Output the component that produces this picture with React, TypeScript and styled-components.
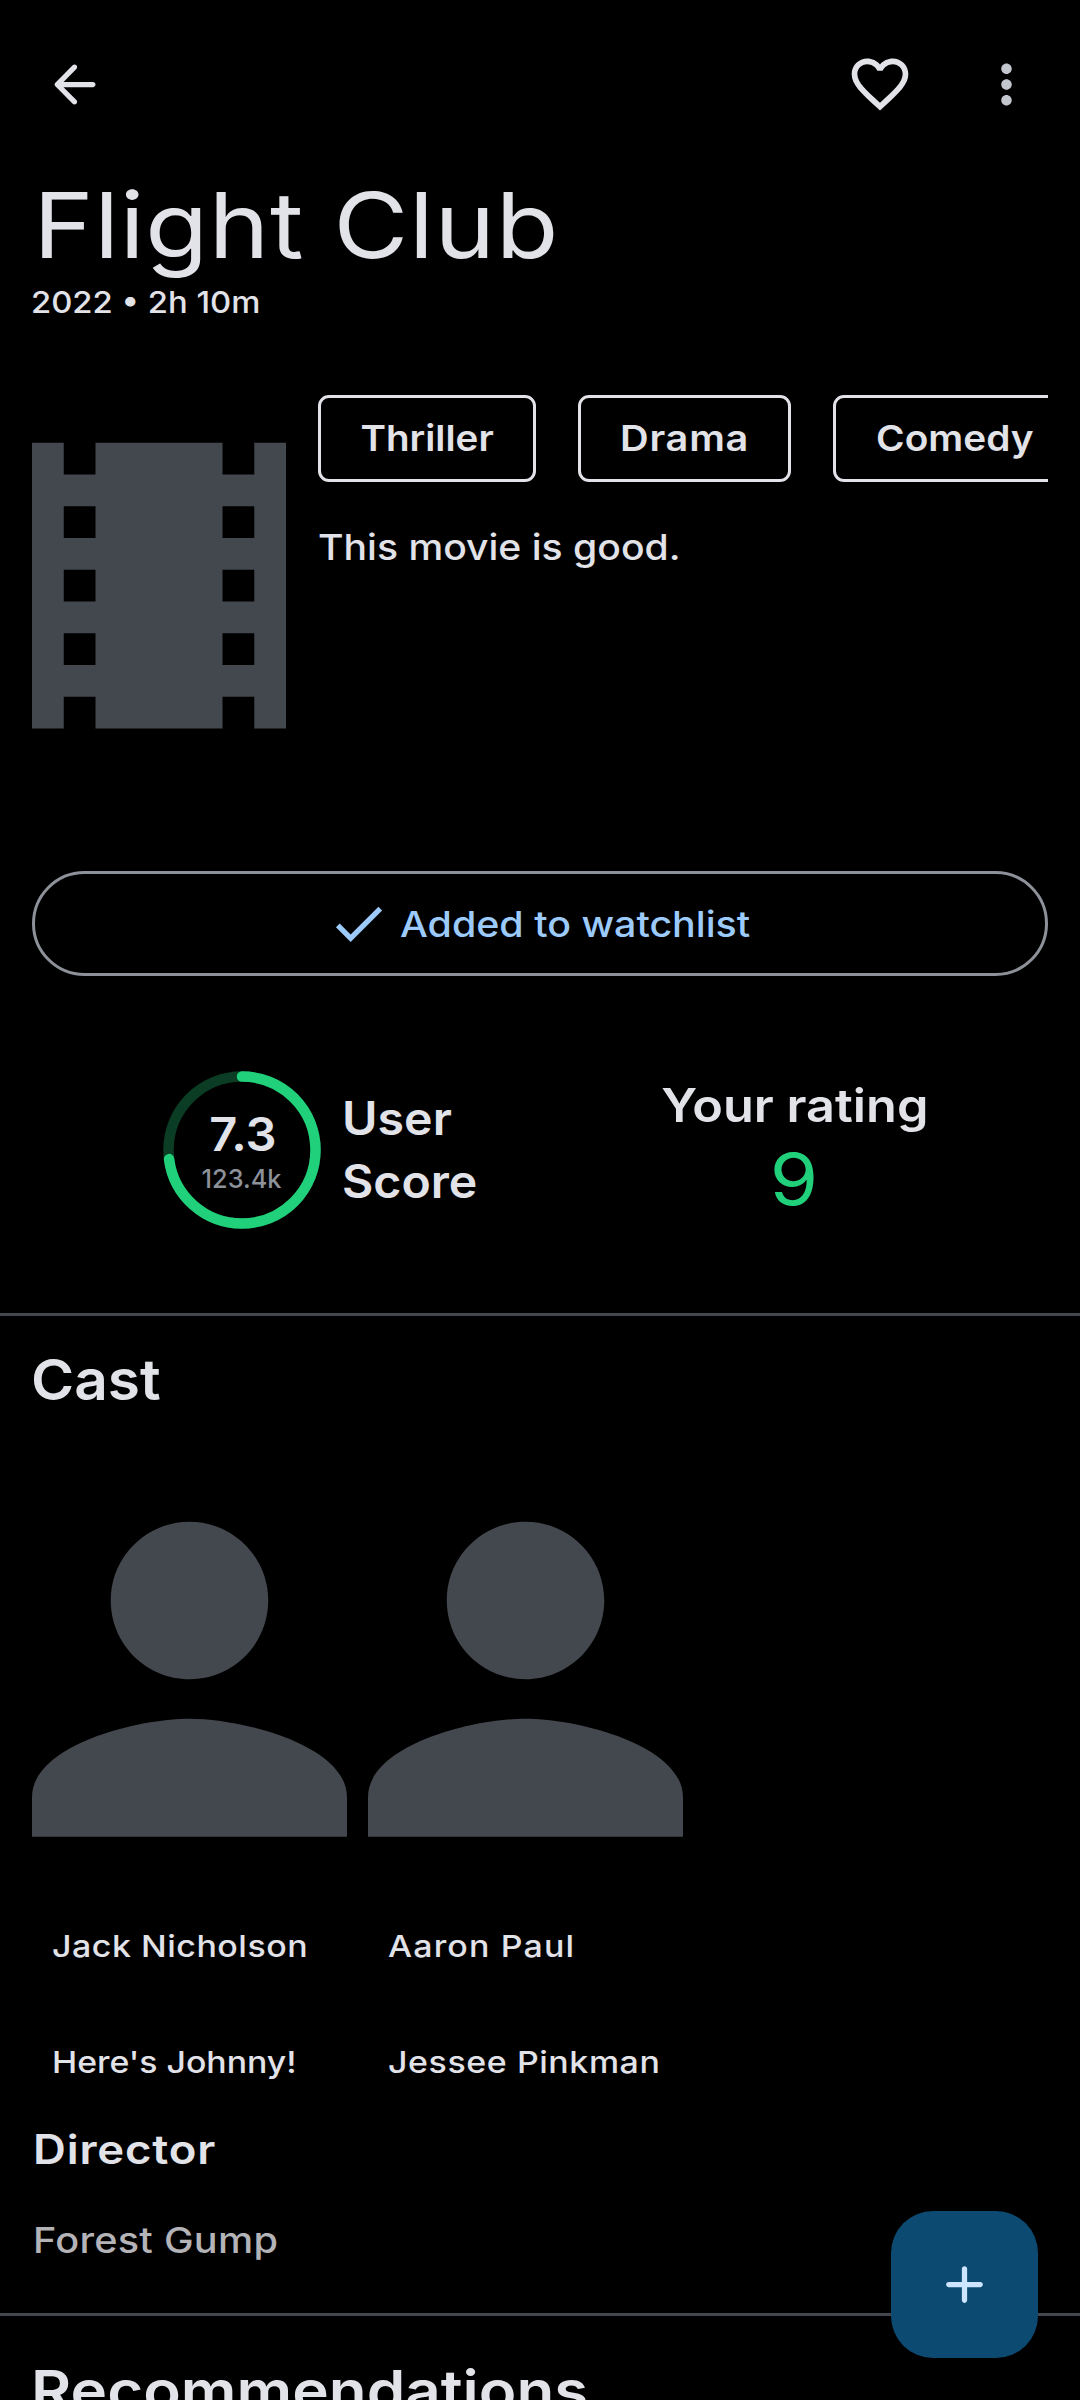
import React from "react";
import styled, { createGlobalStyle } from "styled-components";

const color = {
  background: "#000000",
  text: "#e2e2e9",
  icon: "#c3c6cf",
  outline: "#8d9199",
  surface: "#43474e",
  primary: "#9ccbfb",
  container: "#0d4a72",
  onContainer: "#cee5ff",
  score: "#21d07a",
  scoreTrack: "#0a3d24",
  faded: "#b3b3b8",
};

const GlobalStyle = createGlobalStyle`
  *, *::before, *::after { box-sizing: border-box; }
  html, body { margin: 0; padding: 0; background: ${color.background}; }
  body { font-family: Inter, "Open Sans", sans-serif; color: ${color.text}; }
  svg { display: block; flex: none; }
`;

const Screen = styled.main`
  width: 1080px;
  height: 2400px;
  overflow: hidden;
  display: flex;
  flex-direction: column;
  background: ${color.background};
`;

type TextProps = { $tracking?: number; $stretch?: number };

const Text = styled.span<TextProps>`
  display: block;
  white-space: nowrap;
  letter-spacing: ${(p) => p.$tracking ?? 0}px;
  margin-right: ${(p) => -(p.$tracking ?? 0)}px;
  font-weight: 500;
  transform: scaleX(${(p) => p.$stretch ?? 1});
  transform-origin: left center;
`;

const Toolbar = styled.header`
  flex: none;
  height: 169px;
  padding: 0 42px 0 43px;
  display: flex;
  align-items: center;
  justify-content: space-between;
`;

const Actions = styled.div`
  display: flex;
  align-items: center;
  gap: 61px;
`;

const IconButton = styled.button`
  border: 0;
  padding: 0;
  background: none;
  color: ${color.text};
`;

const FavoriteButton = styled(IconButton)`
  padding-bottom: 2px;
`;

const Heading = styled.div`
  flex: none;
  padding-left: 31px;
`;

const Title = styled(Text).attrs({ as: "h1" })`
  margin: 0;
  padding-left: 2px;
  font-size: 91px;
  line-height: 113px;
  font-weight: 400;
`;

const Subtitle = styled(Text)`
  font-size: 30.3px;
  line-height: 40px;
`;

const Hero = styled.section`
  flex: none;
  margin: 73px 32px 0;
  height: 381px;
  display: grid;
  grid-template-columns: 254px 1fr;
  column-gap: 32px;
`;

const Details = styled.div`
  min-width: 0;
`;

const ChipRow = styled.div`
  display: flex;
  gap: 42px;
  overflow: hidden;
`;

const Chip = styled.div<{ $width: number }>`
  flex: none;
  width: ${(p) => p.$width}px;
  height: 87px;
  border: 3px solid ${color.text};
  border-radius: 11px;
  display: flex;
  align-items: center;
  justify-content: center;
`;

const ChipLabel = styled(Text)`
  transform-origin: center;
  font-size: 35.4px;
  line-height: 53px;
  font-weight: 600;
`;

const Overview = styled(Text)`
  margin-top: 39px;
  font-size: 35.4px;
  line-height: 53px;
`;

const WatchlistButton = styled.button`
  flex: none;
  margin: 95px 32px 0;
  height: 105px;
  padding: 0;
  border: 3px solid ${color.outline};
  border-radius: 53px;
  background: none;
  color: ${color.primary};
  font-family: inherit;
  display: flex;
  align-items: center;
  justify-content: center;
  gap: 10px;
`;

const WatchlistLabel = styled(Text)`
  margin-right: 38px;
  padding-top: 1px;
  font-size: 35.4px;
  line-height: 53px;
`;

const Ratings = styled.section`
  flex: none;
  margin-top: 95px;
  height: 158px;
  padding: 0 88px 0 41px;
  display: grid;
  grid-template-columns: 556px 1fr;
`;

const UserScore = styled.div`
  display: flex;
  align-items: center;
  justify-content: center;
  gap: 21px;
`;

const ScoreDial = styled.div`
  width: 158px;
  height: 158px;
  display: grid;
  place-items: center;

  > * {
    grid-area: 1 / 1;
  }
`;

const ScoreText = styled.div`
  padding-top: 2px;
  display: flex;
  flex-direction: column;
  align-items: center;
`;

const ScoreValue = styled(Text)`
  padding-left: 3px;
  transform-origin: center;
  font-size: 46px;
  line-height: 56px;
  font-weight: 600;
`;

const ScoreVotes = styled(Text)`
  font-size: 25.3px;
  line-height: 34px;
  color: ${color.outline};
`;

const ScoreCaption = styled.div`
  width: 134px;
`;

const RatingLabel = styled(Text)<{ $centered?: boolean }>`
  transform-origin: ${(p) => (p.$centered ? "center" : "left center")};
  font-size: 46px;
  line-height: 63px;
  font-weight: 600;
`;

const YourRating = styled.div`
  padding-top: 3px;
  display: flex;
  flex-direction: column;
  align-items: center;
`;

const RatingValue = styled(Text)`
  transform-origin: center;
  font-size: 71px;
  line-height: 84px;
  font-weight: 400;
  color: ${color.score};
`;

const Divider = styled.hr<{ $top: number }>`
  flex: none;
  width: 100%;
  height: 3px;
  margin: ${(p) => p.$top}px 0 0;
  border: 0;
  background: ${color.surface};
`;

const SectionTitle = styled(Text).attrs({ as: "h2" })<{ $top: number }>`
  flex: none;
  margin-top: ${(p) => p.$top}px;
  margin-bottom: 0;
  padding-left: 31px;
  transform-origin: 31px center;
  font-size: 56.6px;
  line-height: 74px;
  font-weight: 600;
`;

const CastList = styled.div`
  flex: none;
  margin-top: 26px;
  padding-left: 32px;
  display: flex;
  gap: 21px;
`;

const CastCard = styled.article`
  width: 315px;
  height: 640px;
`;

const CastText = styled(Text)<{ $top: number }>`
  margin-top: ${(p) => p.$top}px;
  padding-left: 20px;
  transform-origin: 20px center;
  font-size: 30.3px;
  line-height: 42px;
`;

const Crew = styled.section`
  flex: none;
  margin-top: 36px;
  padding-left: 33px;
`;

const CrewRole = styled(Text)`
  font-size: 40.4px;
  line-height: 62px;
  font-weight: 600;
`;

const CrewName = styled(Text)`
  margin-top: 33px;
  font-size: 35.4px;
  line-height: 53px;
  color: ${color.faded};
`;

const Fab = styled.button`
  position: fixed;
  left: 891px;
  top: 2211px;
  width: 147px;
  height: 147px;
  padding: 0;
  border: 0;
  border-radius: 42px;
  background: ${color.container};
  color: ${color.onContainer};
  display: flex;
  align-items: center;
  justify-content: center;
`;

type IconProps = { path: string; size?: number; fill?: string };

const Icon = ({ path, size = 63, fill = "currentColor" }: IconProps) => (
  <svg width={size} height={size} viewBox="0 0 24 24" fill={fill} aria-hidden="true">
    <path d={path} />
  </svg>
);

const paths = {
  back: "M19 11H7.83l4.88-4.88c.39-.39.39-1.03 0-1.42-.39-.39-1.02-.39-1.41 0l-6.59 6.59c-.39.39-.39 1.02 0 1.41l6.59 6.59c.39.39 1.02.39 1.41 0 .39-.39.39-1.02 0-1.41L7.83 13H19c.55 0 1-.45 1-1s-.45-1-1-1z",
  heart:
    "M16.5 3c-1.74 0-3.41.81-4.5 2.09C10.91 3.81 9.24 3 7.5 3 4.42 3 2 5.42 2 8.5c0 3.78 3.4 6.86 8.55 11.54L12 21.35l1.45-1.32C18.6 15.36 22 12.28 22 8.5 22 5.42 19.58 3 16.5 3zm-4.4 15.55l-.1.1-.1-.1C7.14 14.24 4 11.39 4 8.5 4 6.5 5.5 5 7.5 5c1.54 0 3.04.99 3.57 2.36h1.87C13.46 5.99 14.96 5 16.5 5c2 0 3.5 1.5 3.5 3.5 0 2.89-3.14 5.74-7.9 10.05z",
  more: "M12 8c1.1 0 2-.9 2-2s-.9-2-2-2-2 .9-2 2 .9 2 2 2zm0 2c-1.1 0-2 .9-2 2s.9 2 2 2 2-.9 2-2-.9-2-2-2zm0 6c-1.1 0-2 .9-2 2s.9 2 2 2 2-.9 2-2-.9-2-2-2z",
  check: "M9 16.17L4.83 12l-1.42 1.41L9 19 21 7l-1.41-1.41z",
  person:
    "M8 8c2.21 0 4-1.79 4-4s-1.79-4-4-4-4 1.79-4 4 1.79 4 4 4zm0 2c-2.67 0-8 1.34-8 4v2h16v-2c0-2.66-5.33-4-8-4z",
  add: "M18 13h-5v5c0 .55-.45 1-1 1s-1-.45-1-1v-5H6c-.55 0-1-.45-1-1s.45-1 1-1h5V6c0-.55.45-1 1-1s1 .45 1 1v5h5c.55 0 1 .45 1 1s-.45 1-1 1z",
};

const Poster = () => (
  <svg width="254" height="381" viewBox="4 0 16 24" fill={color.surface} aria-hidden="true">
    <path d="M18 3v2h-2V3H8v2H6V3H4v18h2v-2h2v2h8v-2h2v2h2V3h-2zM8 17H6v-2h2v2zm0-4H6v-2h2v2zm0-4H6V7h2v2zm10 8h-2v-2h2v2zm0-4h-2v-2h2v2zm0-4h-2V7h2v2z" />
  </svg>
);

const Portrait = () => (
  <svg width="315" height="472.5" viewBox="0 -4 16 24" fill={color.surface} aria-hidden="true">
    <path d={paths.person} />
  </svg>
);

const Ring = ({ value }: { value: number }) => (
  <svg width="158" height="158" viewBox="0 0 158 158" fill="none" strokeWidth="10.5" aria-hidden="true">
    <circle cx="79" cy="79" r="73.5" stroke={color.scoreTrack} />
    <circle
      cx="79"
      cy="79"
      r="73.5"
      stroke={color.score}
      strokeLinecap="round"
      pathLength="100"
      strokeDasharray={`${value * 10} 100`}
      transform="rotate(-90 79 79)"
    />
  </svg>
);

const genres = [
  { name: "Thriller", width: 218, tracking: 0, stretch: 1.09 },
  { name: "Drama", width: 213, tracking: 0.68, stretch: 1.12 },
  { name: "Comedy", width: 243, tracking: 0, stretch: 1.096 },
];

const cast = [
  {
    actor: { name: "Jack Nicholson", tracking: 0.47, stretch: 1.12 },
    role: { name: "Here's Johnny!", tracking: 0, stretch: 1.116 },
  },
  {
    actor: { name: "Aaron Paul", tracking: 1.03, stretch: 1.12 },
    role: { name: "Jessee Pinkman", tracking: 0.51, stretch: 1.12 },
  },
];

export default function App() {
  return (
    <>
      <GlobalStyle />
      <Screen>
        <Toolbar>
          <IconButton aria-label="Back">
            <Icon path={paths.back} />
          </IconButton>
          <Actions>
            <FavoriteButton aria-label="Favorite">
              <Icon path={paths.heart} size={68} />
            </FavoriteButton>
            <IconButton aria-label="More">
              <Icon path={paths.more} fill={color.icon} />
            </IconButton>
          </Actions>
        </Toolbar>

        <Heading>
          <Title $tracking={0.6} $stretch={1.125}>
            Flight Club
          </Title>
          <Subtitle $stretch={1.082}>2022 • 2h 10m</Subtitle>
        </Heading>

        <Hero>
          <Poster />
          <Details>
            <ChipRow>
              {genres.map((g) => (
                <Chip key={g.name} $width={g.width}>
                  <ChipLabel $tracking={g.tracking} $stretch={g.stretch}>
                    {g.name}
                  </ChipLabel>
                </Chip>
              ))}
            </ChipRow>
            <Overview $stretch={1.105}>This movie is good.</Overview>
          </Details>
        </Hero>

        <WatchlistButton>
          <Icon path={paths.check} />
          <WatchlistLabel $stretch={1.112}>Added to watchlist</WatchlistLabel>
        </WatchlistButton>

        <Ratings>
          <UserScore>
            <ScoreDial>
              <Ring value={7.3} />
              <ScoreText>
                <ScoreValue $stretch={1.06}>7.3</ScoreValue>
                <ScoreVotes>123.4k</ScoreVotes>
              </ScoreText>
            </ScoreDial>
            <ScoreCaption>
              <RatingLabel $stretch={1.05}>User</RatingLabel>
              <RatingLabel $stretch={1.048}>Score</RatingLabel>
            </ScoreCaption>
          </UserScore>
          <YourRating>
            <RatingLabel $centered $stretch={1.096}>
              Your rating
            </RatingLabel>
            <RatingValue $stretch={1.1}>9</RatingValue>
          </YourRating>
        </Ratings>

        <Divider $top={84} />

        <SectionTitle $top={27} $stretch={1.035}>
          Cast
        </SectionTitle>
        <CastList>
          {cast.map(({ actor, role }) => (
            <CastCard key={actor.name}>
              <Portrait />
              <CastText $top={9.5} $tracking={actor.tracking} $stretch={actor.stretch}>
                {actor.name}
              </CastText>
              <CastText $top={74} $tracking={role.tracking} $stretch={role.stretch}>
                {role.name}
              </CastText>
            </CastCard>
          ))}
        </CastList>
        <Crew>
          <CrewRole $tracking={0.75} $stretch={1.125}>
            Director
          </CrewRole>
          <CrewName $tracking={0.23} $stretch={1.12}>
            Forest Gump
          </CrewName>
        </Crew>

        <Divider $top={46} />

        <SectionTitle $top={38} $stretch={1.093}>
          Recommendations
        </SectionTitle>
      </Screen>
      <Fab aria-label="Add">
        <Icon path={paths.add} />
      </Fab>
    </>
  );
}
